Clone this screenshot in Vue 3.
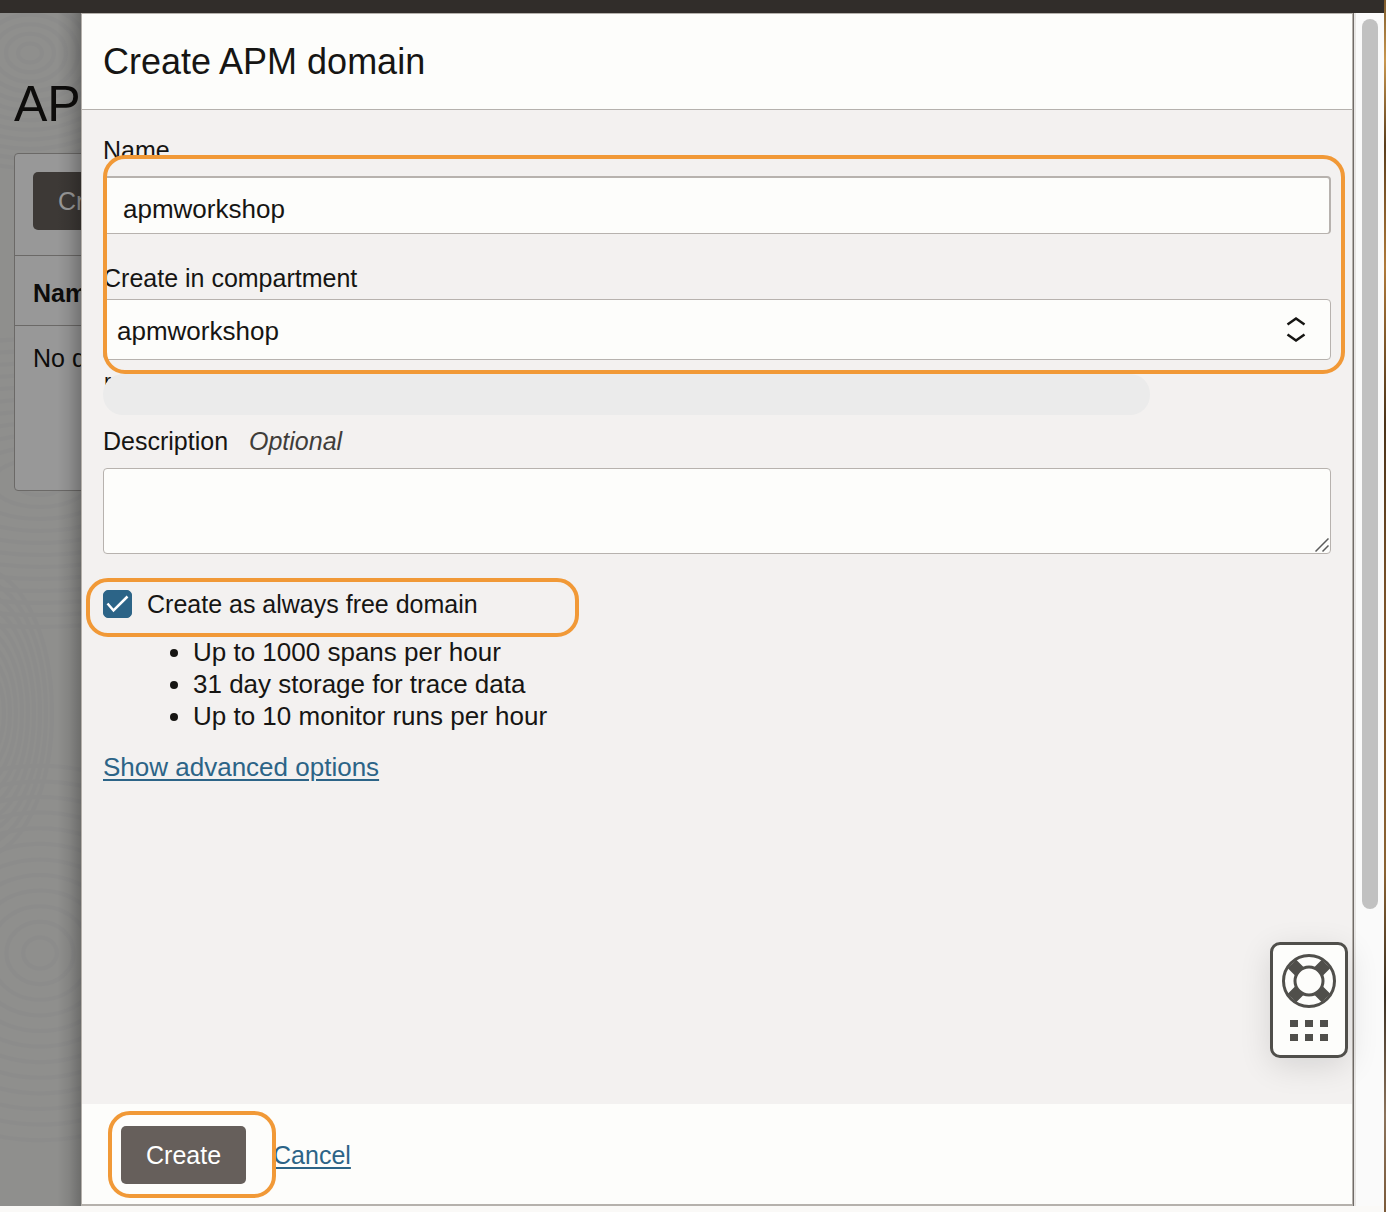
<script setup>
import { ref } from 'vue'

const name = ref('apmworkshop')
const compartment = ref('apmworkshop')
const description = ref('')
const alwaysFree = ref(true)
const limits = [
  'Up to 1000 spans per hour',
  '31 day storage for trace data',
  'Up to 10 monitor runs per hour',
]
const ripples = Array.from({ length: 12 }, (_, i) => 12 + i * 12)
</script>

<template>
  <div class="app">
    <div class="window">
      <div class="topbar"></div>
      <div class="stage">
        <div class="page">
          <svg class="texture" aria-hidden="true">
            <g fill="none" stroke="#878789" stroke-width="4" opacity=".3">
              <ellipse v-for="r in ripples" :key="'a' + r" cx="30" cy="40" :rx="r" :ry="r * 0.8" />
              <ellipse v-for="r in ripples" :key="'b' + r" cx="40" cy="470" :rx="r * 2" :ry="r" />
              <ellipse v-for="r in ripples" :key="'c' + r" cx="-20" cy="700" :rx="r * 0.5" :ry="r" />
              <ellipse v-for="r in ripples" :key="'d' + r" cx="40" cy="940" :rx="r * 1.4" :ry="r * 1.3" />
            </g>
          </svg>
          <h1>AP</h1>
          <div class="card">
            <div class="card-actions"><button type="button" class="btn dim">Create</button></div>
            <table>
              <thead><tr><th>Name</th></tr></thead>
              <tbody><tr><td>No data</td></tr></tbody>
            </table>
          </div>
        </div>

        <section class="panel" role="dialog" aria-labelledby="panel-title">
          <header><h2 id="panel-title">Create APM domain</h2></header>
          <form id="domain-form" class="body" @submit.prevent>
            <div class="marked fields">
              <label for="name">Name</label>
              <input id="name" v-model="name" type="text" class="control text" />
              <label for="compartment">Create in compartment</label>
              <div class="select-wrap">
                <select id="compartment" v-model="compartment" class="control">
                  <option>apmworkshop</option>
                </select>
                <svg class="arrows" width="20" height="28" viewBox="0 0 20 28" fill="none" stroke="#161513" stroke-width="2.5" aria-hidden="true">
                  <path d="M1.500 8.500 10 2.500l8.500 6M1.500 18.500 10 24.500l8.500-6" />
                </svg>
              </div>
              <span class="outline fields-outline"></span>
            </div>
            <div class="path"><span>r</span></div>
            <label for="description">Description <em>Optional</em></label>
            <div class="area-wrap">
              <textarea id="description" v-model="description" class="control"></textarea>
              <svg class="grip" width="14" height="14" viewBox="0 0 14 14" stroke="#5c5c5c" stroke-width="1.500" aria-hidden="true">
                <path d="M.5 13.500 13.500.5M7.500 13.500l6-6" />
              </svg>
            </div>
            <div class="marked check-row">
              <span class="box">
                <input id="free" v-model="alwaysFree" type="checkbox" />
                <svg v-if="alwaysFree" width="29" height="28" viewBox="0 0 29 28" fill="none" stroke="#fff" stroke-width="2.500" aria-hidden="true">
                  <path d="M4.500 13.500 10.500 20.500 24.500 6.500" />
                </svg>
              </span>
              <label for="free">Create as always free domain</label>
              <span class="outline check-outline"></span>
            </div>
            <ul>
              <li v-for="item in limits" :key="item">{{ item }}</li>
            </ul>
            <a href="#advanced" class="advanced">Show advanced options</a>
          </form>
          <footer>
            <div class="marked">
              <button type="submit" form="domain-form" class="btn">Create</button>
              <span class="outline create-outline"></span>
            </div>
            <a href="#cancel">Cancel</a>
          </footer>
        </section>

        <div class="scroll"><div class="thumb"></div></div>
      </div>
      <div class="base"></div>
      <button type="button" class="help" aria-label="Help">
        <svg width="54" height="54" viewBox="0 0 54 54" fill="none" stroke="#504f4b" aria-hidden="true">
          <path d="M17.500 17.500 10 10M36.500 17.500 44 10M17.500 36.500 10 44M36.500 36.500 44 44" stroke-width="12" />
          <circle cx="27" cy="27" r="25.500" stroke-width="3" />
          <circle cx="27" cy="27" r="14" stroke-width="3" />
        </svg>
        <span class="dots"><i v-for="n in 6" :key="n"></i></span>
      </button>
    </div>
    <div class="desktop"></div>
  </div>
</template>

<style>
body {
  margin: 0;
}
</style>

<style scoped>
* {
  box-sizing: border-box;
}
.app {
  display: flex;
  min-height: 100vh;
  font: 25px/32px "Liberation Sans", Arial, sans-serif;
  color: #161513;
}
button,
input,
select,
textarea {
  font: inherit;
  color: inherit;
  margin: 0;
}
.window {
  position: relative;
  flex: 1;
  min-width: 0;
  display: flex;
  flex-direction: column;
}
.desktop {
  width: 2px;
  background: linear-gradient(#7d5a2c, #c9974f 5%, #5a3d1c 12%, #b07a3a 22%, #4a3218 35%, #7a5229 50%, #8a6232 72%, #3a2f22 82%, #8b735c 92%, #7b5a3a);
}
.topbar {
  height: 13px;
  background: #312d2a;
}
.stage {
  flex: 1;
  display: grid;
  grid-template-columns: 81px minmax(0, 1fr) 31px;
}
.page {
  position: relative;
  overflow: hidden;
  background: #8f8f8d;
  padding: 61px 0 0 14px;
  white-space: nowrap;
  color: #0d0c0b;
}
.page::after {
  content: "";
  position: absolute;
  inset: 0 0 0 auto;
  width: 24px;
  background: linear-gradient(to right, transparent, rgba(0, 0, 0, 0.08) 50%, rgba(0, 0, 0, 0.24));
}
.texture {
  position: absolute;
  inset: 0;
  width: 100%;
  height: 100%;
}
.page h1 {
  position: relative;
  margin: 0;
  font-size: 50px;
  line-height: 60px;
  font-weight: 400;
}
.card {
  position: relative;
  width: 400px;
  height: 338px;
  margin-top: 19px;
  border: 1px solid #6b6967;
  border-radius: 4px;
  background: #989898;
}
.card-actions {
  padding: 18px;
  height: 101px;
}
.btn {
  height: 58px;
  padding: 0 25px;
  border: 0;
  border-radius: 5px;
  background: #665f5b;
  color: #fff;
}
.btn.dim {
  background: #3d3936;
  color: #999;
}
table {
  width: 100%;
  border-collapse: collapse;
  text-align: left;
}
th {
  height: 70px;
  padding: 4px 18px 0;
  border: solid #6b6967;
  border-width: 1px 0;
}
td {
  height: 64px;
  padding: 0 18px;
}
.panel {
  display: flex;
  flex-direction: column;
  min-width: 0;
  border: 1px solid #b5b1ac;
  border-bottom-width: 2px;
  background: #f3f1f0;
  box-shadow: 1px 0 #6f6a67, 3px 0 #e8e6e4;
  position: relative;
}
header {
  padding: 28px 21px 27px;
  border-bottom: 1px solid #b5b1ad;
  background: #fdfdfb;
}
h2 {
  margin: 0;
  font-size: 36px;
  line-height: 40px;
  font-weight: 400;
}
.body {
  flex: 1;
  display: flex;
  flex-direction: column;
  padding: 24px 21px;
}
.marked {
  position: relative;
}
.outline {
  position: absolute;
  border: 4px solid #f19937;
  border-radius: 22px;
  pointer-events: none;
}
.fields {
  display: flex;
  flex-direction: column;
}
.fields-outline {
  inset: 21px -14px -14px 0;
}
.control {
  width: 100%;
  border: 1px solid #b7b2ae;
  border-radius: 4px;
  background: #fdfdfb;
  font-size: 26px;
  outline: 0;
}
.text {
  height: 58px;
  margin: 10px 0 28px;
  padding: 8px 19px 0;
  border-width: 2px 2px 1px 1px;
}
.select-wrap {
  display: flex;
  align-items: center;
  position: relative;
  margin-top: 5px;
}
select {
  height: 61px;
  padding: 2px 13px 0;
  appearance: none;
}
.arrows {
  position: absolute;
  right: 25px;
}
.path {
  position: relative;
  height: 41px;
  margin: 14px 0 10px;
  padding-left: 1px;
  font-size: 22px;
  line-height: 16px;
}
.path::after {
  content: "";
  position: absolute;
  inset: 0 181px 0 0;
  border-radius: 20px;
  background: #ebebeb;
}
em {
  margin-left: 14px;
  color: #3f3d3a;
}
.area-wrap {
  display: flex;
  position: relative;
  margin: 11px 0 34px;
}
textarea {
  height: 86px;
  padding: 12px 13px;
  resize: none;
}
.grip {
  position: absolute;
  right: 2px;
  bottom: 2px;
}
.check-row {
  display: flex;
  align-items: center;
  gap: 15px;
}
.check-outline {
  left: -17px;
  top: -10px;
  width: 493px;
  height: 59px;
}
.box {
  display: grid;
}
.box > * {
  grid-area: 1 / 1;
}
.box svg {
  pointer-events: none;
}
.box input {
  appearance: none;
  width: 29px;
  height: 28px;
  border-radius: 5px;
  border: 1px solid #2c6487;
}
.box input:checked {
  background: #2c6487;
}
ul {
  margin: 16px 0 19px;
  padding-left: 90px;
  font-size: 26px;
}
a {
  color: #2c6487;
  text-decoration-thickness: 2px;
  text-underline-offset: 3px;
}
.advanced {
  align-self: flex-start;
  font-size: 26px;
}
footer {
  display: flex;
  align-items: center;
  gap: 27px;
  padding: 22px 39px 20px;
  background: #fdfdfb;
}
footer .marked {
  display: flex;
}
.create-outline {
  inset: -15px -30px -14px -13px;
}
.scroll {
  padding: 6px 6px 0 9px;
  background: #fafafa;
}
.thumb {
  height: 75%;
  border-radius: 8px;
  background: #c1c1c1;
}
.base {
  height: 6px;
  background: #faf9f7;
}
.help {
  position: absolute;
  right: 36px;
  bottom: 154px;
  width: 78px;
  height: 116px;
  display: flex;
  flex-direction: column;
  align-items: center;
  gap: 12px;
  padding: 9px 0 0;
  border: 3px solid #504f4b;
  border-radius: 10px;
  background: #fdfdfb;
  box-shadow: 0 8px 32px rgba(0, 0, 0, 0.12);
}
.dots {
  display: grid;
  grid-template-columns: repeat(3, 8px);
  gap: 7px;
}
.dots i {
  height: 7px;
  background: #504f4b;
}
</style>
